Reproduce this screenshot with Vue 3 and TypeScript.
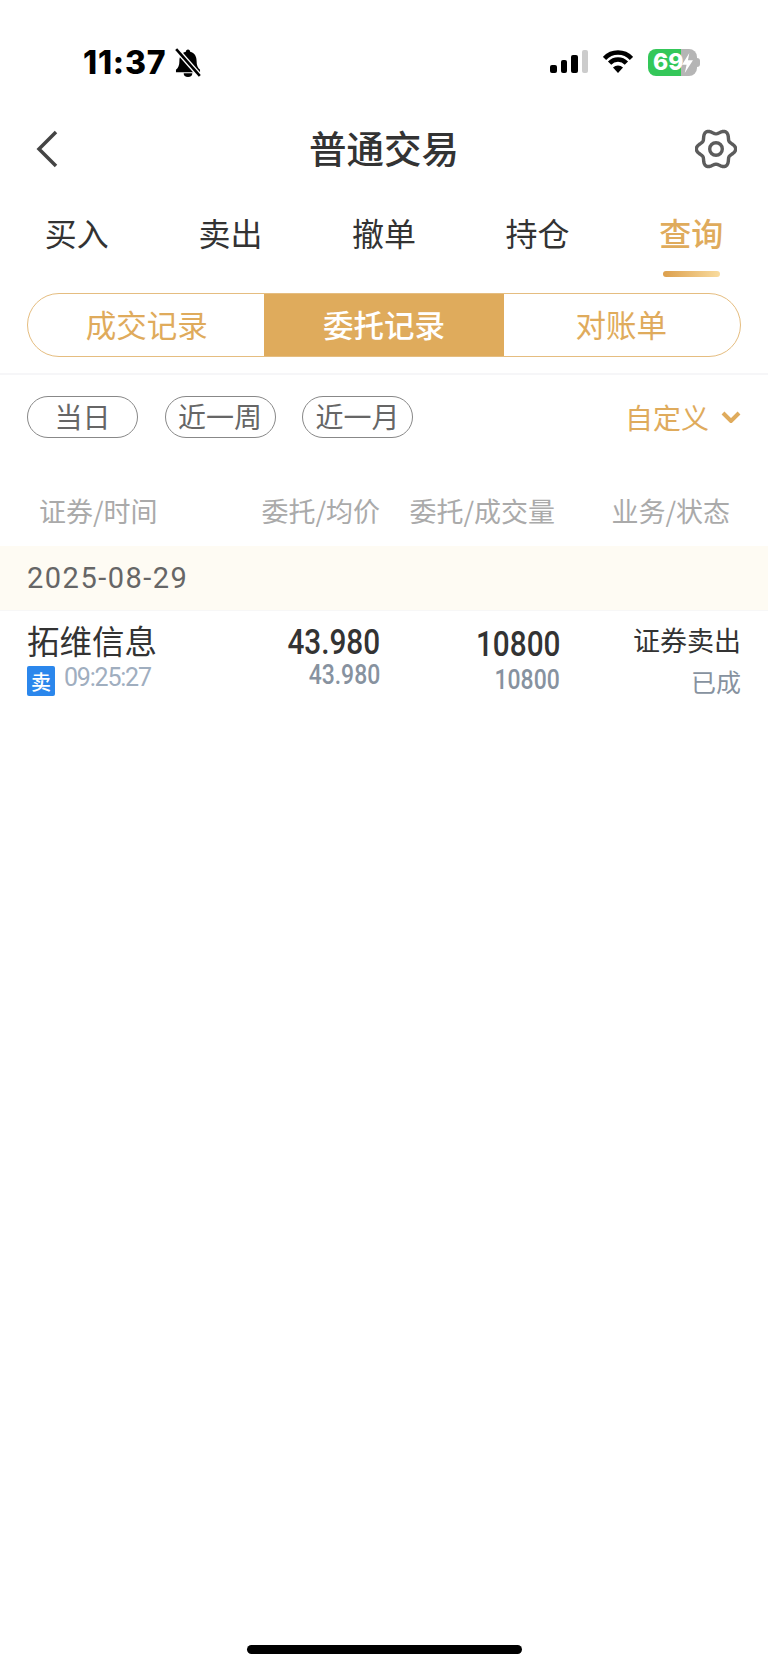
<script setup lang="ts">
const tabs = ["买入", "卖出", "撤单", "持仓", "查询"];
const records = ["成交记录", "委托记录", "对账单"];
const ranges = ["当日", "近一周", "近一月"];

// six soft lobes round the centre of the gear
const gearPath = (() => {
  const pts: string[] = [];
  for (let d = 0; d < 360; d += 5) {
    const t = (d * Math.PI) / 180;
    const r = 17.4 + 2.3 * Math.cos(6 * t);
    pts.push(`${(21 + r * Math.cos(t)).toFixed(2)} ${(21 + r * Math.sin(t)).toFixed(2)}`);
  }
  return `M${pts.join("L")}Z`;
})();
</script>

<template>
  <div class="page">
    <div class="status">
      <span class="clock">11:37</span>
      <svg class="bell" viewBox="0 0 26 27">
        <path d="M13 1.500c-1.200 0-2 .9-2 2C6.800 4.500 5 8 5 12c0 4-1 6.200-3.200 8.200V22.500h22.400v-2.300C22 18.200 21 16 21 12c0-4-1.800-7.500-6-8.500 0-1.100-.8-2-2-2z" fill="#000" />
        <path d="M9 23.500a4 3.500 0 0 0 8 0z" fill="#000" />
        <path d="M2 1l22 25" stroke="#fff" stroke-width="5" />
        <path d="M2 1l22 25" stroke="#000" stroke-width="2.400" />
      </svg>
      <div class="status-right">
        <div class="signal">
          <i class="b1"></i><i class="b2"></i><i class="b3"></i><i class="b4"></i>
        </div>
        <svg class="wifi" viewBox="0 0 30 23">
          <path d="M1.500 8.400A18.500 18.500 0 0 1 28.500 8.400" fill="none" stroke="#000" stroke-width="4.500" />
          <path d="M6.600 13.150A11.500 11.500 0 0 1 23.400 13.150" fill="none" stroke="#000" stroke-width="4.500" />
          <path d="M15 23L10 17.500A7.500 7.500 0 0 1 20 17.500Z" fill="#000" />
        </svg>
        <div class="battery">
          <span class="level">69</span>
          <svg class="bolt" viewBox="0 0 12 22">
            <path d="M8 0L0 13h5l-2 9 9-14H6.500z" fill="#fff" />
          </svg>
          <span class="tip"></span>
        </div>
      </div>
    </div>

    <div class="nav">
      <svg class="back" viewBox="0 0 24 38">
        <path d="M21 2L4 19l17 17" fill="none" stroke="#444" stroke-width="3.500" />
      </svg>
      <span class="title">普通交易</span>
      <svg class="gear" viewBox="0 0 42 42">
        <path :d="gearPath" fill="none" stroke="#5c5c5c" stroke-width="3.400" stroke-linejoin="round" />
        <circle cx="21" cy="21" r="6.300" fill="none" stroke="#5c5c5c" stroke-width="3.400" />
      </svg>
    </div>

    <div class="tabs">
      <div v-for="(tab, i) in tabs" :key="tab" class="tab" :class="{ on: i === 4 }">
        <span>{{ tab }}</span>
        <i class="mark"></i>
      </div>
    </div>

    <div class="segment">
      <div v-for="(item, i) in records" :key="item" class="seg-item" :class="{ on: i === 1 }">{{ item }}</div>
    </div>

    <div class="filters">
      <span v-for="r in ranges" :key="r" class="pill">{{ r }}</span>
      <span class="custom">
        自定义
        <svg class="chevron" viewBox="0 0 20 12">
          <path d="M2 2l8 8 8-8" fill="none" stroke="#dfab5c" stroke-width="4" />
        </svg>
      </span>
    </div>

    <div class="head">
      <span>证券/时间</span>
      <span>委托/均价</span>
      <span>委托/成交量</span>
      <span>业务/状态</span>
    </div>

    <div class="date">2025-08-29</div>

    <div class="row">
      <div class="cell-name">
        <div class="name">拓维信息</div>
        <div class="meta">
          <span class="side">卖</span>
          <span class="time">09:25:27</span>
        </div>
      </div>
      <div class="cell-num price">
        <div class="big">43.980</div>
        <div class="small">43.980</div>
      </div>
      <div class="cell-num volume">
        <div class="big">10800</div>
        <div class="small">10800</div>
      </div>
      <div class="cell-state">
        <div class="kind">证券卖出</div>
        <div class="state">已成</div>
      </div>
    </div>

    <div class="home"></div>
  </div>
</template>

<style scoped>
.page {
  height: 1670px;
  display: flex;
  flex-direction: column;
  background: #fff;
  font-family: "Noto Sans CJK SC", "Noto Sans", sans-serif;
  color: #333;
}

.status {
  height: 114px;
  display: flex;
  align-items: flex-start;
  padding: 48px 71px 0 83px;
  box-sizing: border-box;
}

.clock {
  font-family: Inter, sans-serif;
  font-weight: 800;
  font-size: 32px;
  line-height: 29px;
  letter-spacing: 0.8px;
  color: #000;
}

.bell {
  width: 28px;
  height: 29px;
  margin: 0 0 0 8px;
}

.status-right {
  margin-left: auto;
  display: flex;
  align-items: flex-start;
}

.signal {
  display: flex;
  align-items: flex-end;
  gap: 4px;
  height: 23px;
  margin-top: 2px;
}

.signal i {
  width: 6.500px;
  background: #000;
  border-radius: 2px;
}

.signal .b1 { height: 8px; }
.signal .b2 { height: 13px; }
.signal .b3 { height: 18px; }
.signal .b4 { height: 23px; background: #ccc; }

.wifi {
  width: 30px;
  height: 23px;
  margin: 2px 0 0 15px;
}

.battery {
  position: relative;
  width: 49px;
  height: 27px;
  margin: 1px 0 0 15px;
  border-radius: 8px;
  background: linear-gradient(90deg, #34c759 0, #34c759 67%, #b5b5b5 67%, #b5b5b5 100%);
}

.level {
  position: absolute;
  left: 5px;
  top: 0;
  font-family: Inter, sans-serif;
  font-weight: 800;
  font-size: 23px;
  line-height: 27px;
  color: #fff;
}

.bolt {
  position: absolute;
  left: 34px;
  top: 4px;
  width: 11px;
  height: 20px;
}

.tip {
  position: absolute;
  right: -3px;
  top: 9px;
  width: 3px;
  height: 9px;
  border-radius: 0 3px 3px 0;
  background: #b5b5b5;
}

.nav {
  height: 70px;
  display: grid;
  grid-template-columns: 1fr auto 1fr;
  align-items: center;
  padding: 0 31px;
}

.back {
  width: 24px;
  height: 38px;
  margin-left: 4px;
}

.title {
  font-size: 37.500px;
  font-weight: 500;
  line-height: 44px;
  margin-bottom: 5px;
  color: #333;
}

.gear {
  width: 42px;
  height: 42px;
  justify-self: end;
}

.tabs {
  display: grid;
  grid-template-columns: repeat(5, 1fr);
  padding-top: 26px;
}

.tab {
  display: flex;
  flex-direction: column;
  align-items: center;
  font-size: 32px;
  line-height: 44px;
}

.tab.on {
  color: #dfab5c;
  font-weight: 500;
}

.mark {
  width: 57px;
  height: 6px;
  margin-top: 17px;
  border-radius: 3px;
}

.tab.on .mark {
  background: linear-gradient(90deg, #dc9f4c, #f9dc9f);
}

.segment {
  display: grid;
  grid-template-columns: repeat(3, 1fr);
  height: 64px;
  margin: 16px 27px 0;
  border: 1px solid #e5bd80;
  border-radius: 32px;
  overflow: hidden;
  box-sizing: border-box;
}

.seg-item {
  display: flex;
  align-items: center;
  justify-content: center;
  padding-bottom: 2px;
  font-size: 30.500px;
  color: #dfab5c;
}

.seg-item.on {
  margin: -1px;
  background: #dfab5c;
  color: #fff;
  font-weight: 500;
}

.filters {
  display: flex;
  align-items: center;
  gap: 26.500px;
  height: 42px;
  margin-top: 16px;
  padding: 21px 27px 0;
  border-top: 2px solid #f6f6f8;
}

.pill {
  width: 111px;
  height: 42px;
  box-sizing: border-box;
  display: flex;
  align-items: center;
  justify-content: center;
  padding-bottom: 2px;
  border: 1px solid #888;
  border-radius: 21px;
  font-size: 28px;
  color: #666;
}

.custom {
  margin-left: auto;
  display: flex;
  align-items: center;
  gap: 12px;
  font-size: 28px;
  color: #dfab5c;
}

.chevron {
  width: 20px;
  height: 12px;
}

.head {
  display: grid;
  grid-template-columns: 1fr 175px 175px 175px;
  height: 50px;
  margin-top: 47px;
  padding: 0 38px 0 39px;
  align-items: center;
  font-size: 27px;
  color: #aaa;
  text-align: right;
}

.head span:first-child {
  text-align: left;
}

.date {
  height: 64px;
  margin-top: 11px;
  padding-left: 27px;
  display: flex;
  align-items: center;
  background: #fefbf3;
  font-family: Roboto, sans-serif;
  font-size: 29px;
  color: #666;
  letter-spacing: 1.500px;
}

.row {
  display: grid;
  grid-template-columns: 1fr 180px 180px 181px;
  padding: 10px 27px 0;
  border-top: 1px solid #f7f7f7;
}

.name {
  font-size: 32.500px;
  line-height: 38px;
}

.meta {
  display: flex;
  align-items: center;
  gap: 9px;
  margin-top: 7px;
}

.side {
  width: 28px;
  height: 30px;
  display: flex;
  align-items: center;
  justify-content: center;
  background: #2b87ec;
  border-radius: 2px;
  color: #fff;
  font-size: 20px;
  font-weight: 500;
}

.time {
  font-family: Roboto, sans-serif;
  font-size: 25px;
  line-height: 30px;
  color: #a0aebf;
  letter-spacing: -1.200px;
  margin-top: -6px;
}

.cell-num {
  font-family: Roboto, sans-serif;
  padding-top: 4px;
}

.big,
.small {
  width: fit-content;
  margin-left: auto;
  transform: scaleX(0.85);
  transform-origin: right;
  font-weight: 500;
}

.big {
  font-size: 35px;
  line-height: 35px;
  color: #333;
}

.small {
  font-size: 27px;
  line-height: 30px;
  color: #87929f;
}

.volume {
  padding-top: 6px;
}

.volume .small {
  margin-top: 3px;
}

.cell-state {
  text-align: right;
}

.kind {
  font-size: 27px;
  line-height: 38px;
}

.state {
  font-size: 25px;
  line-height: 38px;
  margin-top: 3px;
  color: #87929f;
}

.home {
  width: 275px;
  height: 9px;
  margin: auto auto 16px;
  border-radius: 5px;
  background: #000;
}
</style>
